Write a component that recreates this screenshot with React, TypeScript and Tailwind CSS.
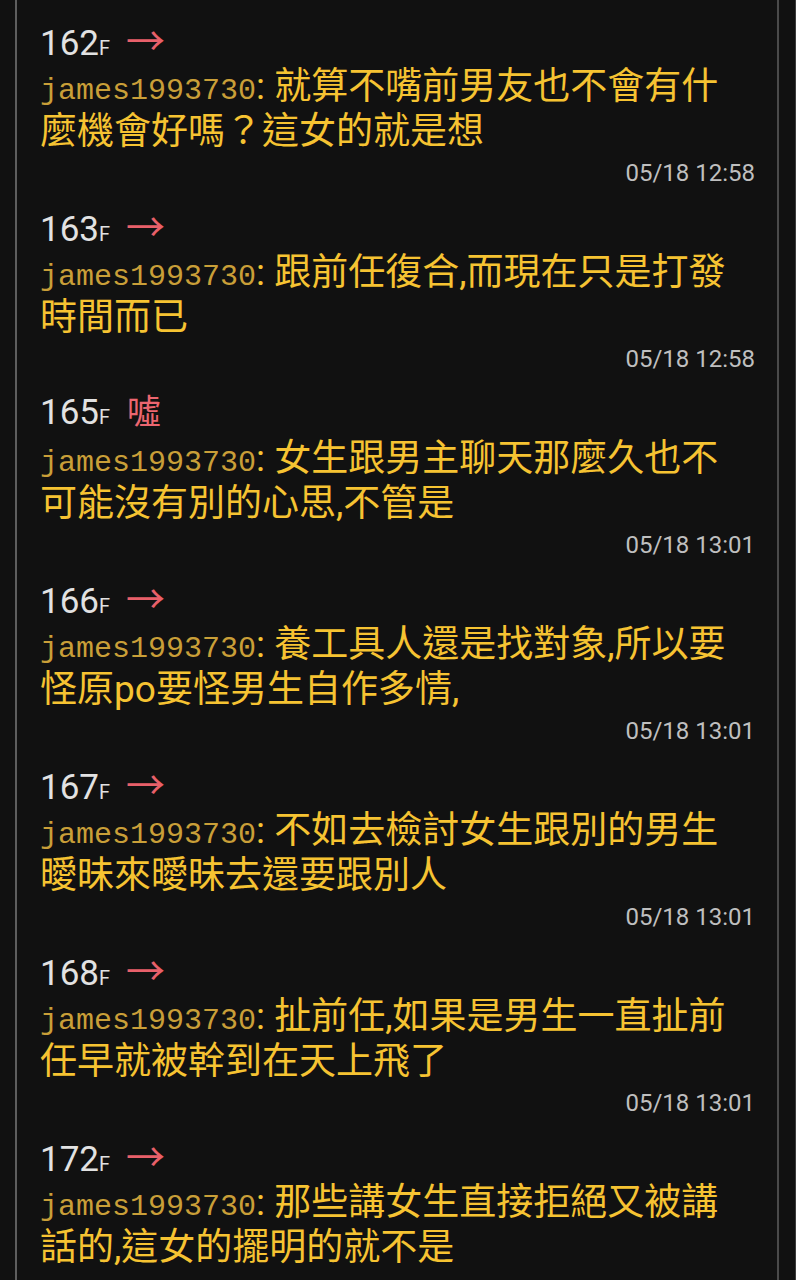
import React from 'react';

type Push = {
  floor: number;
  tag: 'push' | 'boo';
  lines: [string, string];
  time?: string;
};

const USER = 'james1993730';

const pushes: Push[] = [
  { floor: 162, tag: 'push', lines: ['就算不嘴前男友也不會有什', '麼機會好嗎？這女的就是想'], time: '05/18 12:58' },
  { floor: 163, tag: 'push', lines: ['跟前任復合,而現在只是打發', '時間而已'], time: '05/18 12:58' },
  { floor: 165, tag: 'boo', lines: ['女生跟男主聊天那麼久也不', '可能沒有別的心思,不管是'], time: '05/18 13:01' },
  { floor: 166, tag: 'push', lines: ['養工具人還是找對象,所以要', '怪原po要怪男生自作多情,'], time: '05/18 13:01' },
  { floor: 167, tag: 'push', lines: ['不如去檢討女生跟別的男生', '曖昧來曖昧去還要跟別人'], time: '05/18 13:01' },
  { floor: 168, tag: 'push', lines: ['扯前任,如果是男生一直扯前', '任早就被幹到在天上飛了'], time: '05/18 13:01' },
  { floor: 172, tag: 'push', lines: ['那些講女生直接拒絕又被講', '話的,這女的擺明的就不是'] },
];

const PushRow: React.FC<{ push: Push }> = ({ push }) => {
  return (
    <div className="pb-[17px]">
      <div className="flex h-[40px] items-baseline leading-[40px] font-['Roboto','Noto_Sans_CJK_TC',sans-serif]">
        <span className="text-[35px] text-[#e2e2e2]">{push.floor}</span>
        <span className="text-[20px] text-[#e2e2e2]">F</span>
        {push.tag === 'push' ? (
          <span className="ml-[16px] text-[39px] leading-[40px] text-[#e8606a] font-['Noto_Sans_CJK_TC',sans-serif]">→</span>
        ) : (
          <span className="ml-[17px] text-[34px] leading-[40px] text-[#ec6670] font-['Noto_Sans_CJK_TC',sans-serif]">噓</span>
        )}
      </div>

      <div className="mt-[6px] whitespace-nowrap text-[37px] leading-[45px] text-[#f6c332] font-['Roboto','Noto_Sans_CJK_TC',sans-serif]">
        <div>
          <span className="text-[30px] leading-[30px] text-[#c99f38] font-['Liberation_Mono',monospace]">{USER}</span>
          {': '}
          {push.lines[0]}
        </div>
        <div>{push.lines[1]}</div>
      </div>

      {push.time && (
        <div className="mt-[5px] text-right text-[24px] leading-[28px] text-[#bfbfbf] font-['Roboto',sans-serif]">
          {push.time}
        </div>
      )}
    </div>
  );
};

export default function App() {
  return (
    <div className="flex h-[1280px] w-[796px] overflow-hidden bg-[#111111]">
      <div className="w-[15px] shrink-0" />
      <div className="w-[2px] shrink-0 bg-[#5e5e5e]" />
      <main className="w-[760px] shrink-0 pl-[23px] pr-[22px] pt-[18px]">
        {pushes.map((p) => (
          <PushRow key={p.floor} push={p} />
        ))}
      </main>
      <div className="w-[2px] shrink-0 bg-[#4a4a4a]" />
      <div className="flex-1 border-r border-[#3c3c3c]" />
    </div>
  );
}
